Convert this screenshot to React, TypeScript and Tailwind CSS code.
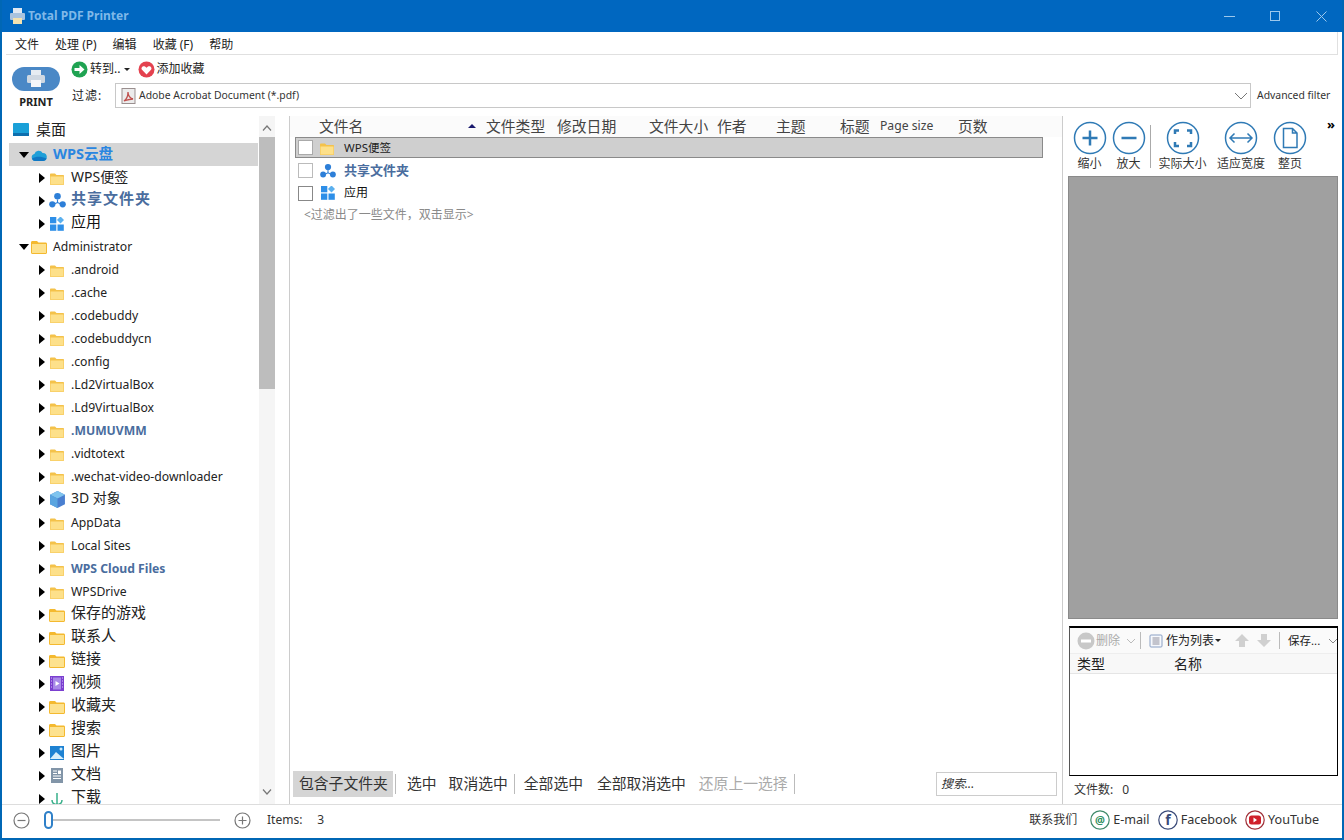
import React from "react";

const font = "font-['Noto_Sans','Noto_Sans_CJK_SC',sans-serif]";

function Folder({ big = false }: { big?: boolean }) {
  return big ? (
    <svg width="16" height="14" viewBox="0 0 16 14" className="shrink-0">
      <path d="M0 2.500C0 1.500.6 1 1.500 1H6l1.500 1.500h7c.9 0 1.500.5 1.500 1.500v8.500c0 .9-.6 1.500-1.500 1.500h-13C.6 14 0 13.400 0 12.500z" fill="#f4b92f" />
      <rect x="1" y="4" width="14" height="9" fill="#fde28f" />
    </svg>
  ) : (
    <svg width="14" height="12" viewBox="0 0 14 12" className="shrink-0 mt-[3px]">
      <path d="M0 1.500C0 .8.500.5 1 .5h4L6.500 2H13c.6 0 1 .4 1 1v8c0 .6-.4 1-1 1H1c-.6 0-1-.4-1-1z" fill="#f4c24a" />
      <rect x="0.5" y="3.500" width="13" height="8" fill="#fde08a" />
    </svg>
  );
}
function Cloud() {
  return (
    <svg width="16" height="12" viewBox="0 0 16 12" className="shrink-0">
      <path d="M4 12a3.500 3.500 0 0 1-.6-6.900A4.500 4.500 0 0 1 11.600 4 4 4 0 0 1 12 12z" fill="#1f9fd8" />
      <path d="M1 9.500C5 7 10 7 15.500 9.500 15 11 14 12 12 12H4C2.500 12 1.500 11 1 9.500z" fill="#0f77c4" />
    </svg>
  );
}
function Share({ s = 18 }: { s?: number }) {
  return (
    <svg width={s} height={s} viewBox="0 0 18 18" className="shrink-0">
      <circle cx="9" cy="4.500" r="3.500" fill="#2d7fd8" />
      <circle cx="3.500" cy="13" r="3.300" fill="#2d7fd8" />
      <circle cx="14.500" cy="13" r="3.300" fill="#2d7fd8" />
      <path d="M9 8v3M9 11l-3 1.500M9 11l3 1.500" stroke="#2d7fd8" strokeWidth="1.200" />
    </svg>
  );
}
function Apps() {
  return (
    <svg width="14" height="14" viewBox="0 0 14 14" className="shrink-0">
      <rect x="0" y="0" width="6.300" height="6.300" fill="#2e8fe8" />
      <rect x="0" y="7.500" width="6.300" height="6.300" fill="#2e8fe8" />
      <rect x="7.500" y="7.500" width="6.300" height="6.300" fill="#2e8fe8" />
      <rect x="8" y="0.500" width="5" height="5" transform="rotate(45 10.500 3)" fill="#5bb0ee" />
    </svg>
  );
}
function Cube() {
  return (
    <svg width="17" height="17" viewBox="0 0 16 16" className="shrink-0">
      <path d="M8 0l7 3.500v9L8 16l-7-3.500v-9z" fill="#4a7fd0" />
      <path d="M8 0l7 3.500L8 7 1 3.500z" fill="#7fc4ee" />
      <path d="M1 3.500L8 7v9l-7-3.500z" fill="#5aa5e0" />
    </svg>
  );
}
function Video() {
  return (
    <svg width="14" height="15" viewBox="0 0 14 15" className="shrink-0">
      <rect width="14" height="15" fill="#7b3fd0" />
      <rect x="3" y="1.500" width="8" height="12" fill="#a98ae8" />
      <path d="M5.500 5l4 2.500-4 2.500z" fill="#fff" />
      <path d="M1 2h1M1 5h1M1 8h1M1 11h1M12 2h1M12 5h1M12 8h1M12 11h1" stroke="#d8c8f8" />
    </svg>
  );
}
function Pic() {
  return (
    <svg width="14" height="14" viewBox="0 0 14 14" className="shrink-0">
      <rect width="14" height="14" fill="#1e82d2" />
      <path d="M0 13l6-7 8 7z" fill="#d8effb" />
      <circle cx="11" cy="3" r="1.500" fill="#cfeafa" />
    </svg>
  );
}
function Doc() {
  return (
    <svg width="12" height="15" viewBox="0 0 12 15" className="shrink-0">
      <rect width="12" height="15" fill="#8295a8" />
      <path d="M2 3h4M2 5.500h4M2 8h8M2 10.500h8" stroke="#fff" />
      <rect x="7" y="2.500" width="3" height="3.500" fill="#fff" />
    </svg>
  );
}
function Down() {
  return (
    <svg width="12" height="14" viewBox="0 0 12 14" className="shrink-0">
      <path d="M6 1v11M1 8c0 3 2 4.500 5 4.500S11 11 11 8" stroke="#38b08a" strokeWidth="1.500" fill="none" />
    </svg>
  );
}

type Row = { t: string; i: React.ReactNode; lvl?: number; open?: boolean; cls?: string };
const F = <Folder />;
const B = <Folder big />;
const small = "text-[12.2px] text-[#222] mt-[2px]";
const blueSmall = "text-[12.2px] font-bold text-[#4a6d9e] mt-[2px]";
const cjk = "text-[15px] text-[#222] -mt-[5px]";
const rows: Row[] = [
  { t: "WPS云盘", i: <Cloud />, lvl: 0, open: true, cls: "font-bold text-[#2a86e0] text-[14.500px] -mt-[2px]" },
  { t: "WPS便签", i: F, cls: "text-[14px] text-[#222] -mt-[2px]" },
  { t: "共享文件夹", i: <Share s={17} />, cls: "font-bold text-[#4a6d9e] text-[15px] tracking-[1px] -mt-[5px]" },
  { t: "应用", i: <Apps />, cls: "text-[15px] text-[#111] -mt-[5px]" },
  { t: "Administrator", i: B, lvl: 0, open: true, cls: small },
  { t: ".android", i: F, cls: small },
  { t: ".cache", i: F, cls: small },
  { t: ".codebuddy", i: F, cls: small },
  { t: ".codebuddycn", i: F, cls: small },
  { t: ".config", i: F, cls: small },
  { t: ".Ld2VirtualBox", i: F, cls: small },
  { t: ".Ld9VirtualBox", i: F, cls: small },
  { t: ".MUMUVMM", i: F, cls: blueSmall },
  { t: ".vidtotext", i: F, cls: small },
  { t: ".wechat-video-downloader", i: F, cls: small },
  { t: "3D 对象", i: <Cube />, cls: "text-[14px] text-[#222] -mt-[4px]" },
  { t: "AppData", i: F, cls: small },
  { t: "Local Sites", i: F, cls: small },
  { t: "WPS Cloud Files", i: F, cls: blueSmall },
  { t: "WPSDrive", i: F, cls: small },
  { t: "保存的游戏", i: B, cls: cjk },
  { t: "联系人", i: B, cls: cjk },
  { t: "链接", i: B, cls: cjk },
  { t: "视频", i: <Video />, cls: cjk },
  { t: "收藏夹", i: B, cls: cjk },
  { t: "搜索", i: B, cls: cjk },
  { t: "图片", i: <Pic />, cls: cjk },
  { t: "文档", i: <Doc />, cls: cjk },
  { t: "下载", i: <Down />, cls: cjk },
];

function TreeRow({ r, sel }: { r: Row; sel?: boolean }) {
  const zero = r.lvl === 0;
  return (
    <div className={`flex items-center h-[23px] shrink-0 ${sel ? "bg-[#d5d5d5]" : ""} ${zero ? "pl-[9px]" : "pl-[27px]"}`}>
      <span className="w-[11px] flex justify-center shrink-0">
        {r.open ? (
          <span className="w-0 h-0 border-x-[5px] border-x-transparent border-t-[6px] border-t-black" />
        ) : (
          <span className="w-0 h-0 border-y-[5px] border-y-transparent border-l-[6px] border-l-black" />
        )}
      </span>
      <span className="flex justify-center items-center shrink-0 w-[18px] ml-[1px]">{r.i}</span>
      <span className={`ml-[5px] whitespace-nowrap ${r.cls ?? ""}`}>{r.t}</span>
    </div>
  );
}

function RoundBtn({ label, w, children }: { label: string; w: number; children: React.ReactNode }) {
  return (
    <div className="flex flex-col items-center shrink-0" style={{ width: w }}>
      <svg width="34" height="34" viewBox="0 0 34 34" className="mt-[5px]">
        <circle cx="17" cy="17" r="15.500" fill="#fff" stroke="#2f7ab5" strokeWidth="1.500" />
        {children}
      </svg>
      <span className="text-[12px] leading-[16px] text-[#333] whitespace-nowrap mt-[1px]">{label}</span>
    </div>
  );
}

function Social({ c, label, children }: { c: string; label: string; children: React.ReactNode }) {
  return (
    <div className="flex items-center gap-[3px]">
      <svg width="20" height="20" viewBox="0 0 20 20">
        <circle cx="10" cy="10" r="9.200" fill="#fff" stroke={c} strokeWidth="1.200" />
        {children}
      </svg>
      <span className="text-[12.600px] text-[#333]">{label}</span>
    </div>
  );
}

function Sep() {
  return <span className="block w-px h-[20px] bg-[#bbb] shrink-0" />;
}

export default function App() {
  return (
    <div className={`${font} w-[1344px] h-[840px] bg-white overflow-hidden flex flex-col border-x-2 border-b-2 border-[#0067b5] text-[#222]`}>
      {/* title bar */}
      <div className="h-8 -mx-[2px] bg-[#0067c0] flex items-center shrink-0 pl-[10px]">
        <svg width="15" height="16" viewBox="0 0 15 16">
          <rect x="3" y="0" width="9" height="6" fill="#dfe8f2" />
          <rect x="0" y="5" width="15" height="7" rx="1" fill="#a8c3df" />
          <rect x="3" y="10" width="9" height="6" fill="#f3e2b0" />
        </svg>
        <span className="ml-[3px] text-[12px] font-bold text-[#7fb8e8]">Total PDF Printer</span>
        <div className="ml-auto flex items-center text-[#9cc8ec]">
          <div className="w-[46px] flex justify-center"><span className="w-[11px] h-px bg-[#9cc8ec]" /></div>
          <div className="w-[46px] flex justify-center"><span className="w-[10px] h-[10px] border border-[#9cc8ec]" /></div>
          <div className="w-[46px] flex justify-center">
            <svg width="11" height="11" viewBox="0 0 11 11"><path d="M.5.5l10 10M10.500.5l-10 10" stroke="#9cc8ec" /></svg>
          </div>
        </div>
      </div>
      {/* menu */}
      <div className="h-[23px] shrink-0 ml-[4px] mr-[4px] bg-white border-b border-r border-[#e0e0e0] flex items-center text-[12px] text-[#222] pl-[9px] pt-[3px] gap-[16px] leading-none">
        <span>文件</span><span>处理 (P)</span><span>编辑</span><span>收藏 (F)</span><span>帮助</span>
      </div>
      {/* toolbar */}
      <div className="h-[61px] shrink-0 flex pl-[10px] pr-[7px] bg-white">
        <div className="w-[48px] flex flex-col items-center pt-[12px] shrink-0">
          <div className="w-[48px] h-[24px] rounded-full bg-[#4a88c6] flex items-center justify-center">
            <svg width="20" height="18" viewBox="0 0 20 18">
              <rect x="5" y="0" width="10" height="6" fill="#e6ecf2" />
              <rect x="1" y="5" width="18" height="8" rx="1.500" fill="#cfd8e2" />
              <rect x="5" y="10" width="10" height="7" fill="#f5f7fa" />
            </svg>
          </div>
          <span className="text-[11px] font-bold text-[#222] mt-[4px] leading-[14px]">PRINT</span>
        </div>
        <div className="ml-[12px] flex-1 flex flex-col min-w-0">
          <div className="h-[28px] flex items-center text-[12px] text-[#222]">
            <svg width="17" height="17" viewBox="0 0 17 17" className="-ml-[1px]">
              <circle cx="8.500" cy="8.500" r="8" fill="#1fa352" />
              <path d="M3.500 7h5V4l5 4.500-5 4.500v-3h-5z" fill="#fff" />
            </svg>
            <span className="ml-[2px]">转到..</span>
            <span className="ml-[4px] w-0 h-0 border-x-[3px] border-x-transparent border-t-[3px] border-t-[#222]" />
            <svg width="17" height="17" viewBox="0 0 17 17" className="ml-[8px]">
              <circle cx="8.500" cy="8.500" r="8" fill="#e4424f" />
              <path d="M8.500 13.500L4 8.800c-1.500-2 .9-4.600 3-3.300l1.500 1.200L10 5.500c2.100-1.300 4.500 1.300 3 3.300z" fill="#fff" />
            </svg>
            <span className="ml-[1px]">添加收藏</span>
          </div>
          <div className="flex items-center h-[25px]">
            <span className="text-[12px] w-[43px] shrink-0 tracking-[1px]">过滤:</span>
            <div className="flex-1 h-[25px] border border-[#c8c8c8] bg-white flex items-center pl-[5px] min-w-0">
              <svg width="15" height="16" viewBox="0 0 15 16">
                <rect x="1" y="0.500" width="13" height="15" fill="#ececec" stroke="#9a8f8f" />
                <path d="M3 13c3-2 4-6 4-9 0 4 2 6 5 7-3 0-6 1-9 2z" fill="none" stroke="#c0504d" strokeWidth="1.300" />
              </svg>
              <span className="ml-[3px] text-[10.400px] text-[#333] whitespace-nowrap">Adobe Acrobat Document (*.pdf)</span>
              <svg width="14" height="8" viewBox="0 0 14 8" className="ml-auto mr-[2px]"><path d="M1 1l6 6 6-6" fill="none" stroke="#777" /></svg>
            </div>
            <span className="ml-[6px] text-[10.400px] text-[#333] whitespace-nowrap w-[78px] shrink-0">Advanced filter</span>
          </div>
        </div>
      </div>
      {/* main */}
      <div className="flex-1 min-h-0 flex bg-white">
        {/* tree */}
        <div className="w-[288px] shrink-0 flex bg-white border-r border-[#ccc]">
          <div className="w-[249px] ml-[7px] shrink-0 flex flex-col overflow-hidden">
            <div className="flex items-center h-[27px] shrink-0 pl-[4px]">
              <svg width="16" height="13" viewBox="0 0 16 13"><rect width="16" height="13" rx="1" fill="#1aa0d8" /><rect y="10" width="16" height="3" fill="#0e6fae" /></svg>
              <span className="ml-[7px] text-[15px] text-[#222]">桌面</span>
            </div>
            {rows.map((r, i) => <TreeRow key={i} r={r} sel={i === 0} />)}
          </div>
          <div className="w-[16px] ml-[1px] shrink-0 bg-[#f5f5f5] flex flex-col">
            <div className="h-[21px] shrink-0 flex justify-center items-center pt-[2px]">
              <svg width="10" height="6" viewBox="0 0 10 6"><path d="M1 5.500L5 1l4 4.500" fill="none" stroke="#777" strokeWidth="1.200" /></svg>
            </div>
            <div className="h-[252px] shrink-0 bg-[#bdbdbd]" />
            <div className="mt-auto h-[24px] flex justify-center items-center">
              <svg width="10" height="6" viewBox="0 0 10 6"><path d="M1 .5L5 5l4-4.500" fill="none" stroke="#777" strokeWidth="1.200" /></svg>
            </div>
          </div>
          <div className="flex-1" />
        </div>
        {/* file list */}
        <div className="flex-1 min-w-0 flex flex-col bg-white border-r border-[#ccc]">
          <div className="h-[21px] pb-[1px] shrink-0 flex items-center text-[14.800px] text-[#444] bg-[#fbfbfb] whitespace-nowrap">
            <span className="ml-[29px] w-[149px] shrink-0">文件名</span>
            <span className="w-0 h-0 border-x-[4px] border-x-transparent border-b-[4px] border-b-[#1a1a6e] shrink-0" />
            <span className="ml-[10px] w-[71px] shrink-0">文件类型</span>
            <span className="w-[92px] shrink-0">修改日期</span>
            <span className="w-[68px] shrink-0">文件大小</span>
            <span className="w-[59px] shrink-0">作者</span>
            <span className="w-[64px] shrink-0">主题</span>
            <span className="w-[40px] shrink-0">标题</span>
            <span className="w-[78px] shrink-0 text-[12.200px]">Page size</span>
            <span>页数</span>
          </div>
          <div className="ml-[5px] mr-[19px] h-[21px] shrink-0 bg-[#cfcfcf] border border-[#8a8a8a] flex items-center">
            <span className="ml-[2px] w-[15px] h-[15px] bg-white border border-[#aaa]" />
            <span className="ml-[7px]"><Folder /></span>
            <span className="ml-[10px] text-[11.500px] text-[#222]">WPS便签</span>
          </div>
          <div className="h-[23px] mt-[1px] shrink-0 flex items-center pl-[8px]">
            <span className="w-[15px] h-[15px] bg-white border border-[#bbb] shrink-0" />
            <span className="ml-[7px] w-[16px] flex justify-center"><Share s={16} /></span>
            <span className="ml-[8px] text-[13px] font-bold text-[#4a6d9e]">共享文件夹</span>
          </div>
          <div className="h-[22px] shrink-0 flex items-center pl-[8px]">
            <span className="w-[15px] h-[15px] bg-white border border-[#888] shrink-0" />
            <span className="ml-[7px] w-[16px] flex justify-center"><Apps /></span>
            <span className="ml-[8px] text-[12px] text-[#111]">应用</span>
          </div>
          <div className="h-[22px] shrink-0 pl-[14px] flex items-center text-[12px] text-[#8a8a8a]">&lt;过滤出了一些文件，双击显示&gt;</div>
          <div className="mt-auto h-[27px] mb-[7px] shrink-0 flex items-center pl-[3px] text-[14.800px] text-[#333] whitespace-nowrap">
            <span className="h-[26px] w-[100px] pl-[6px] flex items-center bg-[#d5d5d5]">包含子文件夹</span>
            <span className="ml-[2px]"><Sep /></span>
            <span className="ml-[11px]">选中</span>
            <span className="ml-[12px]">取消选中</span>
            <span className="ml-[6px]"><Sep /></span>
            <span className="ml-[9px]">全部选中</span>
            <span className="ml-[14px]">全部取消选中</span>
            <span className="ml-[13px] text-[#aaa]">还原上一选择</span>
            <span className="ml-[6px]"><Sep /></span>
            <div className="ml-auto mr-[5px] w-[121px] h-[24px] border border-[#ccc] bg-white flex items-center pl-[4px] text-[12px] italic text-[#333]">搜索...</div>
          </div>
        </div>
        {/* right panel */}
        <div className="w-[279px] shrink-0 flex flex-col">
          <div className="h-[60px] shrink-0 flex bg-white relative pl-[7px]">
            <RoundBtn label="缩小" w={39}>
              <path d="M17 9.500v15M9.500 17h15" stroke="#2f7ab5" strokeWidth="2.500" />
            </RoundBtn>
            <RoundBtn label="放大" w={39}>
              <path d="M9.500 17h15" stroke="#2f7ab5" strokeWidth="2.500" />
            </RoundBtn>
            <span className="ml-[2px] w-px h-[43px] mt-[9px] bg-[#aaa] shrink-0" />
            <RoundBtn label="实际大小" w={63}>
              <path d="M9 13V9.500h4M21 9.500h4V13M25 21v4h-4M13 25H9v-4" fill="none" stroke="#2f7ab5" strokeWidth="2.500" />
            </RoundBtn>
            <RoundBtn label="适应宽度" w={54}>
              <path d="M6 17h22M10.500 12.500L6 17l4.500 4.500M23.500 12.500L28 17l-4.500 4.500" fill="none" stroke="#2f7ab5" strokeWidth="1.500" />
            </RoundBtn>
            <RoundBtn label="整页" w={44}>
              <path d="M10.500 7.500h9l4.500 4.500v14.500H10.500zM19.500 7.500V12H24" fill="none" stroke="#2f7ab5" strokeWidth="1.500" />
            </RoundBtn>
            <span className="absolute right-[7px] top-[1px] text-[13px] font-bold text-black leading-[14px]">»</span>
          </div>
          <div className="h-[443px] shrink-0 ml-[5px] mr-[4px] bg-[#a0a0a0] border border-[#8a8a8a]" />
          <div className="h-[7px] shrink-0" />
          <div className="h-[150px] shrink-0 ml-[6px] mr-[4px] bg-white border border-t-2 border-black border-l-[#555] flex flex-col">
            <div className="h-[25px] shrink-0 flex items-center text-[12px] pl-[7px] whitespace-nowrap overflow-hidden bg-[#fafafa]">
              <svg width="18" height="18" viewBox="0 0 18 18" className="shrink-0"><circle cx="9" cy="9" r="8.500" fill="#c8c8c8" /><rect x="4" y="7.500" width="10" height="3" fill="#fff" /></svg>
              <span className="text-[#aaa] ml-[1px]">删除</span>
              <svg width="10" height="6" viewBox="0 0 10 6" className="ml-[6px] shrink-0"><path d="M1 1l4 4 4-4" fill="none" stroke="#bbb" /></svg>
              <span className="ml-[4px] w-px h-[17px] bg-[#bbb] shrink-0" />
              <svg width="14" height="14" viewBox="0 0 14 14" className="ml-[8px] shrink-0"><rect x="1" y="1" width="12" height="12" rx="1" fill="#f6f8fc" stroke="#8aa0c4" /><path d="M3.500 4h7M3.500 6h7M3.500 8h7M3.500 10h7" stroke="#667" strokeWidth="0.700" /></svg>
              <span className="ml-[3px] text-[#222]">作为列表</span>
              <span className="ml-[1px] w-0 h-0 border-x-[3px] border-x-transparent border-t-[3px] border-t-[#222] shrink-0" />
              <svg width="16" height="15" viewBox="0 0 16 15" className="ml-[13px] shrink-0"><path d="M8 1l7 7h-4v6H5V8H1z" fill="#d0d0d0" /></svg>
              <svg width="16" height="15" viewBox="0 0 16 15" className="ml-[6px] shrink-0"><path d="M8 14l7-7h-4V1H5v6H1z" fill="#d0d0d0" /></svg>
              <span className="ml-[7px] w-px h-[17px] bg-[#bbb] shrink-0" />
              <span className="ml-[8px] text-[#222] text-[11.500px]">保存...</span>
              <svg width="10" height="6" viewBox="0 0 10 6" className="ml-[8px] shrink-0"><path d="M1 1l4 4 4-4" fill="none" stroke="#888" /></svg>
            </div>
            <div className="h-[21px] shrink-0 flex items-center text-[14px] text-[#222] bg-[#f8f8f8] border-b border-[#e5e5e5] border-t border-t-[#eee]">
              <span className="ml-[7px] w-[97px]">类型</span><span>名称</span>
            </div>
            <div className="flex-1 bg-white" />
          </div>
          <div className="h-[27px] pt-[1px] shrink-0 ml-[11px] flex items-center text-[12px] text-[#333]">文件数:<span className="ml-[9px]">0</span></div>
        </div>
      </div>
      {/* status */}
      <div className="h-[34px] shrink-0 flex items-center bg-white border-t border-[#ddd] pl-[11px] pr-[23px] pb-[3px] text-[12px] text-[#333] whitespace-nowrap">
        <svg width="17" height="17" viewBox="0 0 17 17" className="shrink-0"><circle cx="8.500" cy="8.500" r="7.500" fill="none" stroke="#777" strokeWidth="1.200" /><path d="M4.500 8.500h8" stroke="#777" strokeWidth="1.200" /></svg>
        <div className="ml-[14px] w-[176px] h-[18px] relative flex items-center shrink-0">
          <span className="absolute left-[6px] right-0 h-[2px] bg-[#c4c4c4]" />
          <span className="relative w-[9px] h-[18px] rounded-full bg-white border-2 border-[#2f80c8]" />
        </div>
        <svg width="17" height="17" viewBox="0 0 17 17" className="ml-[14px] shrink-0"><circle cx="8.500" cy="8.500" r="7.500" fill="none" stroke="#777" strokeWidth="1.200" /><path d="M4.500 8.500h8M8.500 4.500v8" stroke="#777" strokeWidth="1.200" /></svg>
        <span className="ml-[16px]">Items:</span>
        <span className="ml-[15px]">3</span>
        <span className="ml-auto">联系我们</span>
        <div className="ml-[13px]">
          <Social c="#3f8a6a" label="E-mail"><text x="10" y="14" textAnchor="middle" fontSize="11" fontWeight="700" fill="#2f8f5f">@</text></Social>
        </div>
        <div className="ml-[8px]">
          <Social c="#3a4a78" label="Facebook"><text x="10" y="15" textAnchor="middle" fontSize="14" fontWeight="700" fill="#3a4a78">f</text></Social>
        </div>
        <div className="ml-[8px]">
          <Social c="#a03038" label="YouTube">
            <rect x="4" y="5.500" width="12" height="9" rx="2.500" fill="#d0202a" />
            <path d="M8.500 7.500l3.500 2.500-3.500 2.500z" fill="#fff" />
          </Social>
        </div>
      </div>
    </div>
  );
}
